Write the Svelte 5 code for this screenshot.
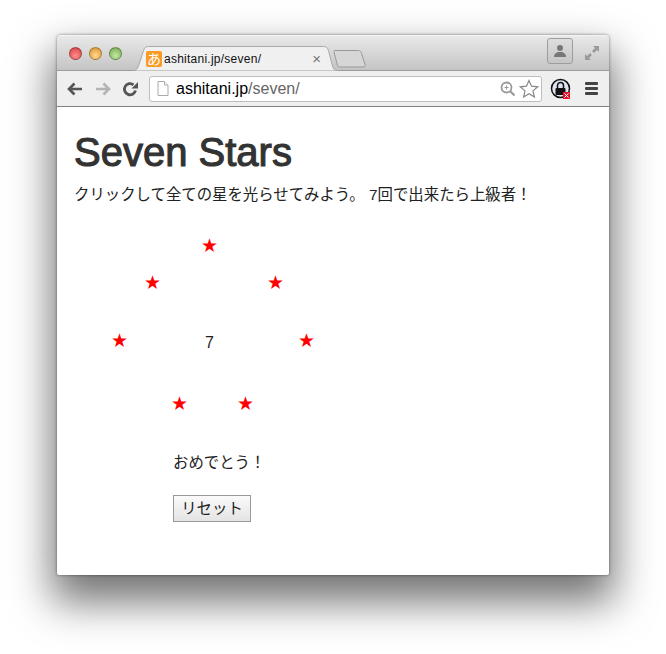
<script>
  const stars = [
    { x: 152.5, y: 138 },
    { x: 95.500, y: 175 },
    { x: 218.500, y: 175 },
    { x: 62.500, y: 233 },
    { x: 249.500, y: 233 },
    { x: 122.500, y: 296 },
    { x: 188.500, y: 296 }
  ]
</script>

<div class="page">
  <div class="window">
    <div class="titlebar">
      <div class="lights">
        <span class="light red"></span>
        <span class="light amber"></span>
        <span class="light green"></span>
      </div>
      <div class="tab">
        <svg class="tab-shape" width="205" height="25" viewBox="0 0 205 25">
          <path d="M0 24.500c3 0 4.500-1.500 5.500-4.500l5-15.500c.8-2.500 2.200-4 5-4h175c2.800 0 4.200 1.500 5 4l4 15.500c.8 3 2.500 4.500 5.500 4.500" fill="#f0f0f0" stroke="#a8a8a8" />
        </svg>
        <span class="favicon">あ</span>
        <span class="tab-title">ashitani.jp/seven/</span>
        <span class="tab-close">×</span>
      </div>
      <svg class="new-tab" width="34" height="20" viewBox="0 0 34 20">
        <path d="M1.500 1.500h24c1.500 0 2.200.6 2.800 2l3.700 12c.4 1.500-.3 2.500-2 2.500H7c-1.500 0-2.300-.7-2.700-2L1 3c-.3-1 0-1.500.5-1.500z" fill="#d6d6d6" stroke="#999" />
      </svg>
      <div class="spacer"></div>
      <div class="profile">
        <svg width="16" height="16" viewBox="0 0 16 16">
          <circle cx="8" cy="5" r="3" fill="#777" />
          <path d="M2 14c0-3 2-5 6-5s6 2 6 5z" fill="#777" />
        </svg>
      </div>
      <svg class="fullscreen" width="16" height="16" viewBox="0 0 16 16" fill="#9a9a9a">
        <path d="M9 1h6v6l-2-2-3 3-2-2 3-3z" />
        <path d="M7 15H1V9l2 2 3-3 2 2-3 3z" />
      </svg>
    </div>

    <div class="toolbar">
      <svg class="nav" width="18" height="16" viewBox="0 0 18 16" fill="none" stroke="#555" stroke-width="2.600">
        <path d="M16 8H3M8.500 2.500L3 8l5.500 5.500" />
      </svg>
      <svg class="nav" width="18" height="16" viewBox="0 0 18 16" fill="none" stroke="#b4b4b4" stroke-width="2.600">
        <path d="M2 8h13M9.500 2.500L15 8l-5.500 5.500" />
      </svg>
      <svg class="nav" width="16" height="16" viewBox="0 0 16 16" fill="none">
        <path d="M13.500 9.500A5.600 5.600 0 1 1 11.500 3.800" stroke="#555" stroke-width="2.800" />
        <path d="M9.500 7.500h6.500V1z" fill="#555" />
      </svg>
      <div class="omnibox">
        <svg class="page-icon" width="12" height="15" viewBox="0 0 12 15" fill="#fff" stroke="#aaa">
          <path d="M1 .5h6.500L11 4v10.500H1z" />
          <path d="M7.500.5V4H11" />
        </svg>
        <span class="url"><span class="host">ashitani.jp</span>/seven/</span>
        <svg class="zoom" width="16" height="16" viewBox="0 0 16 16" fill="none" stroke="#999">
          <circle cx="6.500" cy="6.500" r="5" stroke-width="1.800" />
          <path d="M10.500 10.500l4 4" stroke-width="2.200" />
          <path d="M4.500 6.500h4M6.500 4.500v4" />
        </svg>
        <svg width="20" height="20" viewBox="0 0 20 20" fill="#fff" stroke="#888" stroke-width="1.200">
          <path d="M10 1.500l2.500 5.700 6.200.6-4.700 4.100 1.400 6.100-5.400-3.200-5.400 3.200 1.400-6.100L1.300 7.800l6.200-.6z" />
        </svg>
      </div>
      <svg class="lock" width="22" height="22" viewBox="0 0 22 22">
        <circle cx="10.500" cy="10.500" r="9" fill="#dfe4f2" stroke="#111" stroke-width="1.500" />
        <path d="M7.500 10V7.500a3 3 0 0 1 6 0V10" fill="none" stroke="#111" stroke-width="1.500" />
        <rect x="5.500" y="10" width="10" height="7" rx="1" fill="#111" />
        <rect x="13" y="14" width="7" height="7" fill="#e8112d" />
        <path d="M14.500 15.500l4 4M18.500 15.500l-4 4" stroke="#fff" />
      </svg>
      <div class="menu">
        <span></span>
        <span></span>
        <span></span>
      </div>
    </div>

    <div class="content">
      <h1>Seven Stars</h1>
      <p class="lead">クリックして全ての星を光らせてみよう。 7回で出来たら上級者！</p>
      {#each stars as star}
        <span class="star" style="left: {star.x}px; top: {star.y}px">★</span>
      {/each}
      <span class="count">7</span>
      <div class="result">
        <p>おめでとう！</p>
        <button>リセット</button>
      </div>
    </div>
  </div>
</div>

<style>
  :global(body) {
    margin: 0;
    background: #fff;
  }

  .page {
    height: 654px;
    box-sizing: border-box;
    padding: 35px 0 0 57px;
    overflow: hidden;
  }

  .window {
    position: relative;
    width: 552px;
    height: 540px;
    display: flex;
    flex-direction: column;
    border-radius: 4px 4px 2px 2px;
    box-shadow: 0 0 3px rgba(0, 0, 0, 0.5), 0 22px 42px 5px rgba(0, 0, 0, 0.55);
    overflow: hidden;
    font-family: "Liberation Sans", "Noto Sans CJK JP", sans-serif;
    background: #fff;
  }

  .titlebar {
    height: 36px;
    box-sizing: border-box;
    flex: none;
    display: flex;
    align-items: flex-end;
    background: linear-gradient(#e9e9e9, #c4c4c4);
    border-top: 1px solid #f4f4f4;
    border-bottom: 1px solid #9c9c9c;
  }

  .lights {
    display: flex;
    gap: 7px;
    padding: 0 0 10px 12px;
  }

  .light {
    width: 13px;
    height: 13px;
    border-radius: 50%;
    box-sizing: border-box;
    border: 1px solid rgba(0, 0, 0, 0.3);
  }

  .light.red { background: radial-gradient(circle at 50% 70%, #ff8f8f, #d83a3f); }
  .light.amber { background: radial-gradient(circle at 50% 70%, #ffd890, #d9922a); }
  .light.green { background: radial-gradient(circle at 50% 70%, #c4e8a0, #70a84e); }

  .tab {
    position: relative;
    width: 205px;
    height: 25px;
    margin: 0 0 -1px 11px;
    display: flex;
    align-items: center;
    box-sizing: border-box;
    padding: 0 17px 0 13px;
  }

  .tab-shape {
    position: absolute;
    left: 0;
    top: 0;
  }

  .favicon {
    position: relative;
    width: 16px;
    height: 16px;
    flex: none;
    border-radius: 2px;
    background: #f99a25;
    color: #fff;
    font-size: 14px;
    line-height: 16px;
    text-align: center;
  }

  .tab-title {
    position: relative;
    margin-left: 2px;
    font-size: 12px;
    letter-spacing: 0.25px;
    color: #111;
    flex: 1;
  }

  .tab-close {
    position: relative;
    font-size: 15px;
    color: #777;
  }

  .new-tab {
    flex: none;
    margin: 0 0 1px -5px;
  }

  .spacer {
    flex: 1;
  }

  .profile {
    width: 24px;
    height: 24px;
    margin-bottom: 6px;
    display: flex;
    align-items: center;
    justify-content: center;
    border: 1px solid #9d9d9d;
    border-radius: 3px;
    background: linear-gradient(#dedede, #c6c6c6);
  }

  .fullscreen {
    margin: 0 9px 9px 11px;
  }

  .toolbar {
    height: 36px;
    box-sizing: border-box;
    flex: none;
    display: flex;
    align-items: center;
    padding: 0 8px 0 9px;
    background: #efefef;
    border-bottom: 1px solid #7f7f7f;
  }

  .nav {
    margin-right: 10px;
    flex: none;
  }

  .omnibox {
    width: 393px;
    height: 26px;
    box-sizing: border-box;
    margin-left: 1px;
    display: flex;
    align-items: center;
    padding: 0 2px 0 7px;
    background: #fff;
    border: 1px solid #bdbdbd;
    border-radius: 3px;
  }

  .page-icon {
    flex: none;
  }

  .url {
    flex: 1;
    margin-left: 7px;
    font-size: 16px;
    color: #666;
  }

  .host {
    color: #000;
  }

  .zoom {
    margin-right: 3px;
  }

  .lock {
    margin-left: 8px;
  }

  .menu {
    margin-left: 13px;
    width: 13px;
    display: flex;
    flex-direction: column;
    gap: 2px;
  }

  .menu span {
    height: 3px;
    border-radius: 1px;
    background: #444;
  }

  .content {
    position: relative;
    flex: 1;
    padding: 0 17px;
    color: #333;
  }

  h1 {
    margin: 21px 0 0;
    font-size: 40px;
    line-height: 48px;
    font-weight: 400;
    -webkit-text-stroke: 1.1px #333;
    color: #333;
  }

  .lead {
    margin: 8px 0 0;
    font-size: 15.400px;
    line-height: 22px;
    color: #222;
  }

  .star {
    position: absolute;
    transform: translate(-50%, -50%);
    font-family: "DejaVu Sans", sans-serif;
    font-size: 19px;
    line-height: 1;
    color: #f00;
  }

  .count {
    position: absolute;
    left: 152.500px;
    top: 228px;
    transform: translateX(-50%);
    font-size: 16px;
    line-height: 1;
    color: #222;
  }

  .result {
    position: absolute;
    left: 116px;
    top: 345px;
  }

  .result p {
    margin: 0 0 21px;
    font-size: 15.400px;
    line-height: 22px;
    color: #222;
  }

  button {
    display: block;
    width: 78px;
    height: 27px;
    padding: 0 0 3px;
    font-family: inherit;
    font-size: 15.400px;
    color: #222;
    background: linear-gradient(#fafafa, #e4e4e4);
    border: 1px solid #999;
    border-radius: 0;
  }
</style>
